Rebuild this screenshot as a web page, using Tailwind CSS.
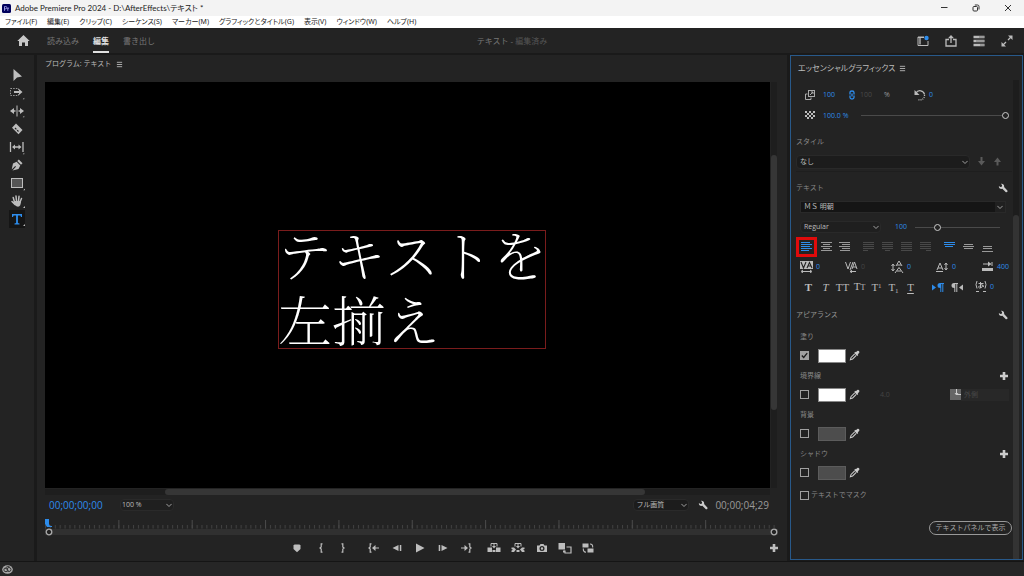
<!DOCTYPE html>
<html lang="ja">
<head>
<meta charset="utf-8">
<meta name="viewport" content="width=device-width, initial-scale=1">
<title>Adobe Premiere Pro 2024</title>
<script src="https://cdn.jsdelivr.net/npm/@tailwindcss/browser@4"></script>
</head>
<body class="bg-[#232323] font-['Open_Sans','Noto_Sans_CJK_JP',sans-serif] text-[8px] leading-[12px] text-[#9a9a9a]">
<svg class="hidden" aria-hidden="true">
  <defs>
    <symbol id="wrench" viewBox="0 0 16 16"><path fill="currentColor" d="M1.4 4.6 3.8 6.400 6 5.800 6.600 3.600 4.700 1.200C7.200.5 10 2.200 9.900 5.300L9.700 6.400 15 12.100C16 13.800 14.300 15.600 12.600 14.700L7 9.300C4.200 10.200.8 8.200 1.400 4.600Z"/></symbol>
    <symbol id="dropper" viewBox="0 0 16 16"><path fill="currentColor" d="M10 3.400 12 1.400C14 .2 16 2.300 14.800 4.200L12.700 6.200 13.500 7.100 12 8.600 7.600 4.200 9.100 2.700Z"/><path fill="none" stroke="currentColor" stroke-width="1.500" d="M8.300 5.500 3 10.800 2 14 5.300 13 10.600 7.700"/></symbol>
    <symbol id="plus" viewBox="0 0 10 10"><path fill="currentColor" d="M3.700 1H6.300V3.700H9V6.300H6.300V9H3.700V6.300H1V3.700H3.700Z"/></symbol>
    <symbol id="chev" viewBox="0 0 8 8"><path fill="none" stroke="currentColor" stroke-width="1.100" d="M.5 2.500 4 6 7.500 2.500"/></symbol>
    <symbol id="menu" viewBox="0 0 8 8"><path stroke="currentColor" d="M1 1.500H7M1 4H7M1 6.500H7"/></symbol>
    <symbol id="corner" viewBox="0 0 4 4"><path fill="currentColor" d="M4 0V4H0Z"/></symbol>
  </defs>
</svg>
<div class="flex min-h-screen flex-col">

  <!-- Window title -->
  <div class="flex h-4 items-center bg-[#f3f3f3] pl-[2px] text-[#222]">
    <svg class="h-[9px] w-[9px]" viewBox="0 0 9 9"><rect width="9" height="9" rx="1.500" fill="#00005b"/><path fill="none" stroke="#b9b9ff" stroke-width=".8" d="M2.500 6.800V2.500H3.600Q4.900 2.500 4.900 3.600T3.600 4.800H2.500M5.800 6.800V3.800M5.800 4.900Q6 3.900 7.100 3.900"/></svg>
    <h1 class="ml-1 flex-1 whitespace-nowrap font-['Lato','Noto_Sans_CJK_JP',sans-serif] text-[8px] [font-feature-settings:'palt']">Adobe Premiere Pro 2024 - D:\AfterEffects\テキスト *</h1>
    <button class="flex w-8 justify-center" aria-label="最小化"><svg class="h-2 w-2" viewBox="0 0 8 8"><path stroke="#333" d="M1 3.500H7.500"/></svg></button>
    <button class="flex w-8 justify-center" aria-label="元に戻す"><svg class="h-2 w-2" viewBox="0 0 8 8"><g fill="none" stroke="#333"><rect x="1" y="2.500" width="4.500" height="4.500" rx="1"/><path d="M2.800 1H5.500Q7 1 7 2.500V5.500"/></g></svg></button>
    <button class="flex w-8 justify-center" aria-label="閉じる"><svg class="h-2 w-2" viewBox="0 0 8 8"><path stroke="#333" d="M1 1 7 7M7 1 1 7"/></svg></button>
  </div>

  <!-- Application menu -->
  <nav class="flex h-3 items-center gap-[10px] bg-white pl-[5px] whitespace-nowrap font-['Noto_Sans','Noto_Sans_CJK_JP',sans-serif] text-[7px] text-[#222] [font-feature-settings:'palt']">
    <button>ファイル(F)</button><button>編集(E)</button><button>クリップ(C)</button><button>シーケンス(S)</button><button>マーカー(M)</button><button>グラフィックとタイトル(G)</button><button>表示(V)</button><button>ウィンドウ(W)</button><button>ヘルプ(H)</button>
  </nav>

  <!-- Workspace header -->
  <header class="grid h-[27px] grid-cols-[1fr_auto_1fr] border-b-2 border-[#1a1a1a] whitespace-nowrap text-[#777]">
    <div class="flex items-center gap-[14px] pl-[17px]">
      <button class="text-[#c8c8c8]" aria-label="ホーム"><svg class="h-[13px] w-[13px]" viewBox="0 0 13 13"><path fill="currentColor" d="M6.500 1 12.700 7H11V12H8V8.500H5V12H2V7H.3Z"/></svg></button>
      <button class="ml-[3px]">読み込み</button>
      <button class="h-full border-b-2 border-[#e0e0e0] pt-[2px] font-bold text-[#e0e0e0]">編集</button>
      <button>書き出し</button>
    </div>
    <div class="flex items-center">テキスト -&nbsp;<span class="text-[#555]">編集済み</span></div>
    <div class="flex items-center justify-end gap-4 pr-[11px] text-[#bbb]">
      <button aria-label="ワークスペース"><svg class="h-3 w-3" viewBox="0 0 12 12"><path fill="none" stroke="currentColor" d="M7 2H1V10.500H11V6"/><path fill="#888" d="M2 3H4V9.500H2Z"/><path stroke="currentColor" d="M1 2.500H7"/><circle cx="9.500" cy="3" r="2.200" fill="#2d8ceb"/></svg></button>
      <button aria-label="クイック書き出し"><svg class="h-3 w-3" viewBox="0 0 12 12"><path fill="none" stroke="currentColor" stroke-width="1.300" d="M4 4.500H1V11H11V4.500H8M6 8V2"/><path fill="currentColor" d="M6 0 9 3.200H3Z"/></svg></button>
      <button aria-label="進行状況"><svg class="h-3 w-3" viewBox="0 0 12 12"><path stroke="currentColor" stroke-width="2.400" d="M.5 2H11.500M.5 6H11.500M.5 10H11.500"/><path stroke="#666" stroke-width=".8" d="M6 2H11M3 6H11M7 10H11"/></svg></button>
      <button aria-label="全画面"><svg class="h-3 w-3" viewBox="0 0 12 12"><path fill="currentColor" d="M7 .5H11.500V5ZM.5 7 5 11.500H.5Z"/><path stroke="currentColor" stroke-width="1.300" d="M10.500 1.500 7 5M5 7 1.500 10.500"/></svg></button>
    </div>
  </header>

  <main class="flex flex-1 gap-[3px] bg-[#1a1a1a]">
    <!-- Tools -->
    <aside class="flex w-[34px] flex-col items-center bg-[#232323] pt-[11px] text-[#bdbdbd]">
      <button class="h-[18px]" aria-label="選択"><svg class="h-4 w-4" viewBox="0 0 16 16"><path fill="currentColor" d="M4.500 2V14L8 10.500 13 9.500Z"/></svg></button>
      <button class="h-[18px]" aria-label="トラックの前方選択"><svg class="h-4 w-4" viewBox="0 0 16 16"><rect x="1.500" y="3.500" width="8" height="7" fill="none" stroke="#999" stroke-dasharray="1.500 1.200"/><path fill="currentColor" d="M5 6H10V4L13.500 7 10 10V8H5Z"/><use href="#corner" x="13.500" y="12.500" width="2" height="2"/></svg></button>
      <button class="h-[18px]" aria-label="リップル"><svg class="h-4 w-4" viewBox="0 0 16 16"><path fill="currentColor" d="M7.500 2.500H8.500V13.500H7.500ZM6.500 7.200V8.800H5V11L1 8 5 5V7.200ZM9.500 7.200V8.800H11V11L15 8 11 5V7.200Z"/><use href="#corner" x="13.500" y="12.500" width="2" height="2"/></svg></button>
      <button class="h-[18px]" aria-label="レーザー"><svg class="h-4 w-4" viewBox="0 0 16 16"><path fill="currentColor" d="M7 2.500 13.500 9 9.500 13.200 3 6.700Z"/><path stroke="#232323" stroke-width="1.200" d="M6 7 9.500 10.500" stroke-dasharray="2 1"/></svg></button>
      <button class="h-[18px]" aria-label="スリップ"><svg class="h-4 w-4" viewBox="0 0 16 16"><path stroke="currentColor" stroke-width="1.300" d="M1.500 3V13M14 3V13M5 8H11"/><path fill="currentColor" d="M6 5.500V10.500L3 8ZM9.500 5.500V10.500L12.500 8Z"/><use href="#corner" x="13.500" y="13.500" width="2" height="2"/></svg></button>
      <button class="h-[18px]" aria-label="ペン"><svg class="h-4 w-4" viewBox="0 0 16 16"><path fill="currentColor" d="M9.800 2.500 13.500 6.200 12 7.700 8.300 4ZM7.600 4.700 11.300 8.400 9.500 12 3.500 13.500 7 9.800 6.200 9 2.700 12.600 4 6.500Z"/></svg></button>
      <button class="h-[18px]" aria-label="長方形"><svg class="h-4 w-4" viewBox="0 0 16 16"><rect x="2.500" y="3.500" width="11" height="9" fill="#555" stroke="currentColor"/><use href="#corner" x="14" y="13.500" width="2" height="2"/></svg></button>
      <button class="h-[18px]" aria-label="手のひら"><svg class="h-4 w-4" viewBox="0 0 16 16"><g fill="none" stroke="currentColor" stroke-width="1.500" stroke-linecap="round"><path d="M5.500 9 4.200 4.500M7.500 8 7 3M9.500 8 10 3.300M11 9 12.500 5.500M6 11.500 3 8.500"/></g><path fill="currentColor" d="M5 8H12Q12 13.500 9 13.800 6.500 13.500 4.500 10Z"/><use href="#corner" x="14" y="13" width="2" height="2"/></svg></button>
      <button class="h-[18px] bg-[#151515] text-[#2d8ceb]" aria-label="横書き文字"><svg class="h-4 w-4" viewBox="0 0 16 16"><path fill="currentColor" d="M3 3H13V6H12L11.300 4.500H8.900V12L10.500 12.500V13.500H5.500V12.500L7.100 12V4.500H4.700L4 6H3Z"/><use href="#corner" x="14" y="13" width="2" height="2" color="#bbb"/></svg></button>
    </aside>

    <!-- Program monitor -->
    <section class="flex min-w-0 flex-1 flex-col bg-[#232323] pl-2">
      <div class="flex h-[18px] items-center gap-[5px] text-[7px] whitespace-nowrap text-[#bbb]"><h2>プログラム: テキスト</h2><button aria-label="パネルメニュー"><svg class="h-[7px] w-[7px]"><use href="#menu"/></svg></button></div>
      <div class="mt-[9px] flex flex-1 pr-[10px]">
        <div class="relative flex-1 bg-black">
          <div class="absolute top-[36.500%] left-[32.200%] flex h-[119px] w-[268px] items-center justify-center border border-[#7a1c1c] pb-2 text-white">
            <p class="font-['MS_Mincho','Noto_Serif_CJK_JP','Noto_Sans_CJK_JP',serif] text-[54px] leading-[65px] font-thin whitespace-nowrap">テキストを<br>左揃え</p>
          </div>
        </div>
        <div class="ml-px flex w-[6px] flex-col bg-[#1e1e1e] pt-[73px] pb-[78px]"><div class="flex-1 rounded-sm bg-[#363636]"></div></div>
      </div>
      <div class="mt-px mr-[17px] flex h-[6px] bg-[#1e1e1e] pr-[125px] pl-[120px]"><div class="flex-1 rounded-sm bg-[#363636]"></div></div>
      <div class="mr-[18px] flex h-5 items-center whitespace-nowrap">
        <span class="w-[75px] pl-1 text-[10px] text-[#2d8ceb]">00;00;00;00</span>
        <div class="relative w-[54px] text-[#bbb]">
          <select class="block h-3 w-full appearance-none rounded-sm border border-[#2a2a2a] bg-[#1f1f1f] pl-px text-[7px] leading-[10px]" aria-label="ズームレベル"><option>100 %</option></select>
          <svg class="pointer-events-none absolute top-[3px] right-[2px] h-[6px] w-[6px]"><use href="#chev"/></svg>
        </div>
        <div class="flex-1"></div>
        <div class="relative w-[56px] text-[#bbb]">
          <select class="block h-3 w-full appearance-none rounded-sm border border-[#2a2a2a] bg-[#1c1c1c] pl-[2px] text-[7px] leading-[10px]" aria-label="再生時の解像度"><option>フル画質</option></select>
          <svg class="pointer-events-none absolute top-[3px] right-[2px] h-[6px] w-[6px]"><use href="#chev"/></svg>
        </div>
        <button class="ml-[9px] text-[#ccc]" aria-label="設定"><svg class="h-[10px] w-[10px]"><use href="#wrench"/></svg></button>
        <span class="ml-[7px] text-[10px]">00;00;04;29</span>
      </div>
      <div class="relative mt-1 mr-[9px] h-[10px]">
        <svg class="block h-full w-full" aria-hidden="true">
          <defs>
            <pattern id="minor" width="4.890" height="10" patternUnits="userSpaceOnUse"><path stroke="#414141" stroke-width="1" d="M.5 6V9.500"/></pattern>
            <pattern id="major" width="73.350" height="10" patternUnits="userSpaceOnUse"><path stroke="#4a4a4a" stroke-width="1" d="M.5 1V9.500"/></pattern>
          </defs>
          <rect width="100%" height="10" fill="url(#minor)"/><rect x="10" width="100%" height="10" fill="url(#major)"/>
        </svg>
        <svg class="absolute top-0 left-0 h-2 w-[7px]" viewBox="0 0 7 8"><path fill="#2d8ceb" d="M0 0H4V5L5 7H7V8H2L0 5Z"/></svg>
      </div>
      <div class="mr-[9px] flex h-[6px] items-center justify-between bg-[#303030] text-[#aaa]">
        <svg class="h-2 w-2 shrink-0" viewBox="0 0 8 8"><circle cx="4" cy="4" r="2.800" fill="#232323" stroke="currentColor" stroke-width="1.300"/></svg>
        <svg class="h-2 w-2 shrink-0" viewBox="0 0 8 8"><circle cx="4" cy="4" r="2.800" fill="#232323" stroke="currentColor" stroke-width="1.300"/></svg>
      </div>
      <div class="flex h-[26px] items-center pl-[240px] text-[#bdbdbd]">
        <button class="flex w-6 justify-center" aria-label="マーカーを追加"><svg class="h-3 w-3" viewBox="0 0 12 12"><path fill="currentColor" d="M3.500 2.500H8.500L9.500 3.500V7L6 10.300 2.500 7V3.500Z"/></svg></button>
        <button class="flex w-6 justify-center" aria-label="インをマーク"><svg class="h-3 w-3" viewBox="0 0 12 12"><path fill="none" stroke="currentColor" stroke-width="1.200" d="M7.500 1.800H6.200V5L5 6 6.200 7V10.200H7.500"/></svg></button>
        <button class="flex w-5 justify-center" aria-label="アウトをマーク"><svg class="h-3 w-3" viewBox="0 0 12 12"><path fill="none" stroke="currentColor" stroke-width="1.200" d="M4.500 1.800H5.800V5L7 6 5.800 7V10.200H4.500"/></svg></button>
        <button class="ml-[9px] flex w-[23px] justify-center" aria-label="インへ移動"><svg class="h-3 w-3" viewBox="0 0 12 12"><path fill="none" stroke="currentColor" stroke-width="1.200" d="M3.500 1.800H2.200V5L1 6 2.200 7V10.200H3.500M6 6H11"/><path fill="currentColor" d="M7.500 3V9L4 6Z"/></svg></button>
        <button class="flex w-[23px] justify-center" aria-label="1 フレーム前へ"><svg class="h-3 w-3" viewBox="0 0 12 12"><path fill="currentColor" d="M7.500 3V9L1.500 6ZM8.800 3H10.300V9H8.800Z"/></svg></button>
        <button class="flex w-[23px] justify-center" aria-label="再生"><svg class="h-3 w-3" viewBox="0 0 12 12"><path fill="currentColor" d="M2 1.500 10.500 6 2 10.500Z"/></svg></button>
        <button class="flex w-[23px] justify-center" aria-label="1 フレーム先へ"><svg class="h-3 w-3" viewBox="0 0 12 12"><path fill="currentColor" d="M4.500 3V9L10.500 6ZM1.700 3H3.200V9H1.700Z"/></svg></button>
        <button class="flex w-[23px] justify-center" aria-label="アウトへ移動"><svg class="h-3 w-3" viewBox="0 0 12 12"><path fill="none" stroke="currentColor" stroke-width="1.200" d="M8.500 1.800H9.800V5L11 6 9.800 7V10.200H8.500M1 6H6"/><path fill="currentColor" d="M4.500 3V9L8 6Z"/></svg></button>
        <button class="ml-[5px] flex w-6 justify-center" aria-label="リフト"><svg class="h-3 w-[14px]" viewBox="0 0 14 12"><path fill="currentColor" d="M.5 5.500H5V10H.5ZM9 5.500H13.500V10H9ZM5.500 8H8.500V10H5.500Z"/><path fill="none" stroke="currentColor" d="M4 4.500V1.500H10V4.500M7 2V5"/><path fill="currentColor" d="M5 4H9L7 6.500Z"/></svg></button>
        <button class="flex w-6 justify-center" aria-label="抽出"><svg class="h-3 w-[14px]" viewBox="0 0 14 12"><path fill="currentColor" d="M.5 5.500H3L5 7.500 3 10H.5V8.500L2 7.700.5 7ZM13.500 5.500H11L9 7.500 11 10H13.500V8.500L12 7.700 13.500 7ZM5.500 8H8.500V10H5.500Z"/><path fill="none" stroke="currentColor" d="M4 4.500V1.500H10V4.500M7 2V5"/><path fill="currentColor" d="M5 4H9L7 6.500Z"/></svg></button>
        <button class="flex w-[23px] justify-center" aria-label="フレームを書き出し"><svg class="h-3 w-3" viewBox="0 0 12 12"><path fill="currentColor" fill-rule="evenodd" d="M1 3.500H3.500L4.500 2H7.500L8.500 3.500H11V10H1ZM6 4A2.500 2.500 0 1 0 6 9 2.500 2.500 0 1 0 6 4M6 5.300A1.200 1.200 0 1 1 6 7.700 1.200 1.200 0 1 1 6 5.300"/></svg></button>
        <button class="flex w-[23px] justify-center" aria-label="比較表示"><svg class="h-3 w-[14px]" viewBox="0 0 14 12"><path fill="currentColor" d="M.5 1H7V7.500H.5Z"/><path fill="none" stroke="currentColor" stroke-width="1.200" d="M8.500 5H13V11H7V8.500"/><path fill="currentColor" d="M5 8.500H7V10.500H5Z"/></svg></button>
        <button class="flex w-[23px] justify-center" aria-label="プロキシの切り替え"><svg class="h-3 w-3" viewBox="0 0 12 12"><path fill="currentColor" d="M.5 1.500H6.500V5.500H.5ZM5.500 6.500H11.500V10.500H5.500Z"/><path fill="none" stroke="currentColor" stroke-width="1.100" d="M8 2Q11 2 10.700 5.500M4 10.200Q1 10 1.300 6.500"/></svg></button>
        <div class="flex-1"></div>
        <button class="mr-[8px]" aria-label="ボタンエディター"><svg class="h-[10px] w-[10px]"><use href="#plus"/></svg></button>
      </div>
    </section>

    <!-- Essential Graphics -->
    <section class="mr-px mb-px flex w-[233px] shrink-0 flex-col border border-[#28598a] bg-[#232323]">
      <div class="flex h-6 items-center gap-[4px] pl-[7px] whitespace-nowrap text-[#bbb]"><h2 class="[font-feature-settings:'palt']">エッセンシャルグラフィックス</h2><button aria-label="パネルメニュー"><svg class="h-[7px] w-[7px]"><use href="#menu"/></svg></button></div>
      <div class="flex flex-1">
        <div class="min-w-0 flex-1 pt-1 pl-[5px] whitespace-nowrap">
          <div class="flex h-[21px] items-center pl-[9px] text-[7px] text-[#2d8ceb]">
            <svg class="h-[10px] w-[10px] text-[#aaa]" viewBox="0 0 10 10"><g fill="none" stroke="currentColor"><rect x="3.500" y=".5" width="6" height="6"/><path d="M2.500 4H.5V9.500H6V7.500M5 5 8 2M6 2H8V4"/></g></svg>
            <span class="ml-2 w-[25px]">100</span>
            <svg class="h-[10px] w-[8px]" viewBox="0 0 8 10"><g fill="none" stroke="currentColor" stroke-width="1.300"><path d="M2 4.500V2.500Q2 1 4 1T6 2.500V4.500M2 5.500V7.500Q2 9 4 9T6 7.500V5.500M4 3.500V6.500"/></g></svg>
            <span class="ml-[4px] w-6 text-[#4a4a4a]">100</span>
            <span class="w-[30px] text-[#999]">%</span>
            <svg class="h-3 w-3 text-[#bbb]" viewBox="0 0 12 12"><path fill="none" stroke="currentColor" stroke-width="1.300" d="M2 4A4.600 4.600 0 0 1 10.500 5.500"/><path fill="none" stroke="currentColor" stroke-width="1.300" stroke-dasharray="1 1" d="M10.500 6A4.500 4.500 0 0 1 4 10.500"/><path fill="currentColor" d="M.5 1V6H5.500Z"/></svg>
            <span class="ml-[3px]">0</span>
          </div>
          <div class="flex h-[21px] items-center pr-[3px] pl-[9px] text-[7px] text-[#2d8ceb]">
            <svg class="h-[9px] w-[10px]" viewBox="0 0 10 9" shape-rendering="crispEdges"><path fill="none" stroke="#bbb" stroke-width="2" stroke-dasharray="2 2" d="M0 1H10M0 5H10M2 3H10M2 7H10"/></svg>
            <span class="ml-2 w-[38px]">100.0 %</span>
            <input type="range" value="100" aria-label="不透明度" class="h-2 min-w-0 flex-1 appearance-none bg-[linear-gradient(#4a4a4a,#4a4a4a)] bg-[length:100%_1px] bg-center bg-no-repeat [&::-webkit-slider-thumb]:h-[7px] [&::-webkit-slider-thumb]:w-[7px] [&::-webkit-slider-thumb]:appearance-none [&::-webkit-slider-thumb]:rounded-full [&::-webkit-slider-thumb]:border [&::-webkit-slider-thumb]:border-[#ccc] [&::-webkit-slider-thumb]:bg-[#232323]">
          </div>
          <label for="style" class="mt-[6px] flex h-5 items-center text-[7px] text-[#888]">スタイル</label>
          <div class="flex h-[20px] items-center border-b border-[#1e1e1e] pr-[10px] text-[#bbb]">
            <div class="relative flex-1"><select id="style" class="block h-[14px] w-full appearance-none rounded-sm border border-[#292929] bg-[#1c1c1c] pl-[3px] text-[7px]"><option>なし</option></select><svg class="pointer-events-none absolute top-1 right-[2px] h-[6px] w-[6px]"><use href="#chev"/></svg></div>
            <button class="ml-[7px] text-[#5a5a5a]" aria-label="スタイルを取り込む"><svg class="h-[9px] w-[9px]" viewBox="0 0 9 9"><path fill="currentColor" d="M3.500 0H5.500V4H8L4.500 8.500 1 4H3.500Z"/></svg></button>
            <button class="ml-[7px] text-[#5a5a5a]" aria-label="スタイルを押し出す"><svg class="h-[9px] w-[9px]" viewBox="0 0 9 9"><path fill="currentColor" d="M3.500 8.500H5.500V5H8L4.500.5 1 5H3.500Z"/></svg></button>
          </div>
          <div class="mt-[7px] flex h-[18px] items-center justify-between pr-1 text-[7px] text-[#888]"><h3>テキスト</h3><button class="text-[#ccc]" aria-label="テキスト設定"><svg class="h-[10px] w-[10px]"><use href="#wrench"/></svg></button></div>
          <div class="flex h-5 items-center pr-[6px] pl-1">
            <div class="relative flex-1 text-[#bbb]"><select class="block h-3 w-full appearance-none border border-[#292929] bg-[#151515] pl-[3px] text-[7px] leading-[10px]" aria-label="フォント"><option>ＭＳ 明朝</option></select><span class="pointer-events-none absolute top-px right-px flex h-[10px] w-[10px] items-center justify-center bg-[#202020]"><svg class="h-[6px] w-[6px]"><use href="#chev"/></svg></span></div>
          </div>
          <div class="flex h-5 items-center pr-[12px] pl-1 text-[7px]">
            <div class="relative w-[81px] text-[#bbb]"><select class="block h-3 w-full appearance-none rounded-sm border border-[#292929] bg-[#1f1f1f] pl-[3px] text-[7px] leading-[10px]" aria-label="フォントスタイル"><option>Regular</option></select><svg class="pointer-events-none absolute top-[3px] right-[2px] h-[6px] w-[6px]"><use href="#chev"/></svg></div>
            <span class="ml-[14px] w-5 text-[#2d8ceb]">100</span>
            <input type="range" value="24" aria-label="フォントサイズ" class="h-2 min-w-0 flex-1 appearance-none bg-[linear-gradient(#4a4a4a,#4a4a4a)] bg-[length:100%_1px] bg-center bg-no-repeat [&::-webkit-slider-thumb]:h-[7px] [&::-webkit-slider-thumb]:w-[7px] [&::-webkit-slider-thumb]:appearance-none [&::-webkit-slider-thumb]:rounded-full [&::-webkit-slider-thumb]:border [&::-webkit-slider-thumb]:border-[#ccc] [&::-webkit-slider-thumb]:bg-[#232323]">
          </div>
          <div class="flex h-5 items-center text-[#999]">
            <button class="flex h-5 w-[21px] shrink-0 items-center justify-center border-3 border-[#e00b0b] text-[#2d8ceb]" aria-label="左揃え"><svg class="h-3 w-[11px]" viewBox="0 0 11 12"><path stroke="currentColor" d="M0 1.500H9M0 3.500H11M0 5.500H9M0 7.500H11M0 9.500H8"/></svg></button>
            <button class="flex w-[18px] justify-center" aria-label="中央揃え"><svg class="h-3 w-[11px]" viewBox="0 0 11 12"><path stroke="currentColor" d="M0 1.500H11M2 3.500H9M0 5.500H11M2 7.500H9M0 9.500H11"/></svg></button>
            <button class="flex w-[19px] justify-center" aria-label="右揃え"><svg class="h-3 w-[11px]" viewBox="0 0 11 12"><path stroke="currentColor" d="M0 1.500H11M3 3.500H11M0 5.500H11M3 7.500H11M1 9.500H11"/></svg></button>
            <button class="ml-[5px] flex w-[19px] justify-center text-[#484848]" aria-label="両端揃え 左"><svg class="h-3 w-[11px]" viewBox="0 0 11 12"><path stroke="currentColor" d="M0 1.500H11M0 3.500H11M0 5.500H11M0 7.500H11M0 9.500H5"/></svg></button>
            <button class="flex w-[19px] justify-center text-[#484848]" aria-label="両端揃え 中央"><svg class="h-3 w-[11px]" viewBox="0 0 11 12"><path stroke="currentColor" d="M0 1.500H11M0 3.500H11M0 5.500H11M0 7.500H11M3 9.500H8"/></svg></button>
            <button class="flex w-[19px] justify-center text-[#484848]" aria-label="両端揃え"><svg class="h-3 w-[11px]" viewBox="0 0 11 12"><path stroke="currentColor" d="M0 1.500H11M0 3.500H11M0 5.500H11M0 7.500H11M0 9.500H11"/></svg></button>
            <button class="flex w-[19px] justify-center text-[#484848]" aria-label="両端揃え 右"><svg class="h-3 w-[11px]" viewBox="0 0 11 12"><path stroke="currentColor" d="M0 1.500H11M0 3.500H11M0 5.500H11M0 7.500H11M6 9.500H11"/></svg></button>
            <button class="ml-[5px] flex w-[19px] justify-center text-[#2d8ceb]" aria-label="上揃え"><svg class="h-3 w-[11px]" viewBox="0 0 11 12"><path stroke="currentColor" d="M0 1.500H11M0 3.500H11M1 5.500H9"/></svg></button>
            <button class="flex w-[19px] justify-center" aria-label="上下中央揃え"><svg class="h-3 w-[11px]" viewBox="0 0 11 12"><path stroke="currentColor" d="M1 3.500H10M0 5.500H11M1 7.500H10"/></svg></button>
            <button class="flex w-[19px] justify-center" aria-label="下揃え"><svg class="h-3 w-[11px]" viewBox="0 0 11 12"><path stroke="currentColor" d="M1 5.500H10M1 7.500H10M0 10.500H11"/></svg></button>
          </div>
          <div class="flex h-5 items-center pl-1 text-[7px] text-[#2d8ceb] [&>span]:ml-[3px]">
            <svg class="h-3 w-[13px] text-[#bbb]" viewBox="0 0 13 12"><rect width="13" height="8" fill="currentColor"/><path fill="none" stroke="#232323" stroke-width="1.100" d="M1 1 3.500 7 6 1M7 7 9.500 1.500 12 7M8 5H11"/><path stroke="currentColor" d="M2 10.500H11M3 9 1 10.500 3 12M10 9 12 10.500 10 12"/></svg><span class="w-[29px]">0</span>
            <svg class="h-3 w-[13px] text-[#bbb]" viewBox="0 0 13 12"><path fill="none" stroke="currentColor" d="M.5 1 3 8 5.500 1M5 9 8 1M7 8 9.500 1 12 8M8 6H11M5 10.500H11M7 9 5 10.500 7 12"/></svg><span class="w-[30px] text-[#444]">0</span>
            <svg class="h-3 w-[13px] text-[#bbb]" viewBox="0 0 13 12"><path fill="none" stroke="currentColor" d="M5 5 8 0 11 5M6 4H10M4 12 8 6.500 12 12M6 10H10M2 4V9M.5 5 2 3 3.500 5M.5 8 2 10 3.500 8"/></svg><span class="w-[29px]">0</span>
            <svg class="h-3 w-[13px] text-[#bbb]" viewBox="0 0 13 12"><path fill="none" stroke="currentColor" d="M1 9 4 2 7 9M2 7H6M0 10.500H7M10 2V9M8.500 4 10 2 11.500 4M8.500 7 10 9 11.500 7"/></svg><span class="w-[29px]">0</span>
            <svg class="h-3 w-[13px] text-[#bbb]" viewBox="0 0 13 12"><path stroke="currentColor" d="M2 3H9M11 1V5"/><path fill="currentColor" d="M7 .5 10.500 3 7 5.500ZM1 7H12V10H1Z"/></svg><span>400</span>
          </div>
          <div class="flex h-5 items-center pl-1 font-['Liberation_Serif',serif] text-[11px] text-[#bbb] [&>button]:w-[17px] [&>button]:text-center">
            <button class="font-bold" aria-label="太字">T</button><button class="italic" aria-label="斜体">T</button><button aria-label="オールキャップス">TT</button><button aria-label="スモールキャップス">T<span class="text-[8px]">T</span></button><button aria-label="上付き文字">T<sup class="text-[7px]">1</sup></button><button aria-label="下付き文字">T<sub class="text-[7px]">1</sub></button><button class="underline underline-offset-2" aria-label="下線">T</button>
            <button class="ml-[10px] flex justify-center text-[#2d8ceb]" aria-label="左から右"><svg class="h-[9px] w-3" viewBox="0 0 12 9"><path fill="currentColor" d="M0 1.500 4 4.500 0 7.500ZM8 0H12V1H11.300V9H10.300V1H9.300V9H8.300V5Q5.500 5 5.500 2.500T8 0Z"/></svg></button>
            <button class="ml-[2px] flex justify-center" aria-label="右から左"><svg class="h-[9px] w-3" viewBox="0 0 12 9"><path fill="currentColor" d="M12 1.500 8 4.500 12 7.500ZM3 0H7V1H6.300V9H5.300V1H4.300V9H3.300V5Q.5 5 .5 2.500T3 0Z"/></svg></button>
            <svg class="ml-[10px] h-3 w-3" viewBox="0 0 12 12"><path fill="none" stroke="currentColor" d="M2 0Q0 3.500 2 7.500M10 0Q12 3.500 10 7.500M3.500 2.500H8.500M5.500 1V7M8 4Q7 7.500 4.500 7T5 4.500 8.500 6M1 10.500H4M8 10.500H11"/></svg><span class="ml-[3px] font-['Open_Sans',sans-serif] text-[7px] text-[#2d8ceb]">0</span>
          </div>
          <div class="mt-[9px] flex h-[18px] items-center justify-between pr-1 text-[7px] text-[#999]"><h3>アピアランス</h3><button class="text-[#ccc]" aria-label="アピアランス設定"><svg class="h-[10px] w-[10px]"><use href="#wrench"/></svg></button></div>

          <div class="mt-1 pr-[3px] pl-1 text-[7px] text-[#888]">
            <label for="fill" class="flex h-[18px] items-center">塗り</label>
            <div class="flex h-[19px] items-center">
              <span class="relative h-[9px] w-[9px]"><input id="fill" type="checkbox" checked class="block h-[9px] w-[9px] appearance-none bg-[#a0a0a0]"><svg class="pointer-events-none absolute top-0 left-0 h-[9px] w-[9px]" viewBox="0 0 9 9"><path fill="none" stroke="#1b1b1b" stroke-width="1.300" d="M1.800 4.500 3.700 6.500 7.200 2.200"/></svg></span>
              <button class="ml-[9px] h-[14px] w-[28px] border border-[#888] bg-white" aria-label="塗りの色"></button>
              <button class="ml-[3px] text-[#ccc]" aria-label="塗りの色を選択"><svg class="h-[11px] w-[11px]"><use href="#dropper"/></svg></button>
            </div>
          </div>
          <div class="mt-[2px] pr-[3px] pl-1 text-[7px] text-[#888]">
            <div class="flex h-[18px] items-center justify-between"><label for="stroke">境界線</label><button class="text-[#ccc]" aria-label="境界線を追加"><svg class="h-[10px] w-[10px]"><use href="#plus"/></svg></button></div>
            <div class="flex h-[19px] items-center">
              <input id="stroke" type="checkbox" class="h-[9px] w-[9px] appearance-none border border-[#a0a0a0]">
              <button class="ml-[9px] h-[14px] w-[28px] border border-[#888] bg-white" aria-label="境界線の色"></button>
              <button class="ml-[3px] text-[#ccc]" aria-label="境界線の色を選択"><svg class="h-[11px] w-[11px]"><use href="#dropper"/></svg></button>
              <span class="ml-5 flex-1 text-[#444]">4.0</span>
              <svg class="h-[11px] w-[11px]" viewBox="0 0 11 11"><path fill="#666" d="M0 0H11V11H0Z"/><path fill="none" stroke="#ccc" d="M6.500 0V5.500H11M5 4 6.500 6 8 4"/></svg>
              <div class="w-[48px]"><select class="block h-3 w-full appearance-none bg-[#282828] pl-[3px] text-[7px] leading-[10px] text-[#484848]" aria-label="境界線の位置" disabled><option>外側</option></select></div>
            </div>
          </div>
          <div class="mt-[2px] pr-[3px] pl-1 text-[7px] text-[#888]">
            <label for="bg" class="flex h-[18px] items-center">背景</label>
            <div class="flex h-[19px] items-center">
              <input id="bg" type="checkbox" class="h-[9px] w-[9px] appearance-none border border-[#a0a0a0]">
              <button class="ml-[9px] h-[14px] w-[28px] border border-[#5c5c5c] bg-[#4d4d4d]" aria-label="背景の色"></button>
              <button class="ml-[3px] text-[#ccc]" aria-label="背景の色を選択"><svg class="h-[11px] w-[11px]"><use href="#dropper"/></svg></button>
            </div>
          </div>
          <div class="mt-[2px] pr-[3px] pl-1 text-[7px] text-[#888]">
            <div class="flex h-[18px] items-center justify-between"><label for="shadow">シャドウ</label><button class="text-[#ccc]" aria-label="シャドウを追加"><svg class="h-[10px] w-[10px]"><use href="#plus"/></svg></button></div>
            <div class="flex h-[19px] items-center">
              <input id="shadow" type="checkbox" class="h-[9px] w-[9px] appearance-none border border-[#a0a0a0]">
              <button class="ml-[9px] h-[14px] w-[28px] border border-[#5c5c5c] bg-[#4d4d4d]" aria-label="シャドウの色"></button>
              <button class="ml-[3px] text-[#ccc]" aria-label="シャドウの色を選択"><svg class="h-[11px] w-[11px]"><use href="#dropper"/></svg></button>
            </div>
          </div>
          <label class="mt-[3px] flex h-5 items-center gap-[2px] pl-1 text-[7px] text-[#888]"><input type="checkbox" class="h-[9px] w-[9px] appearance-none border border-[#a0a0a0]">テキストでマスク</label>
          <div class="mt-4 flex justify-end"><button class="h-[14px] w-[83px] rounded-full border border-[#999] text-[7px] leading-[10px] text-[#aaa]">テキストパネルで表示</button></div>
        </div>
        <div class="mr-[3px] ml-px flex w-[6px] flex-col bg-[#1d1d1d] pt-[135px]"><div class="flex-1 rounded-t-sm bg-[#333]"></div></div>
      </div>
    </section>
  </main>

  <!-- Status bar -->
  <footer class="flex h-[15px] items-center border-t border-[#151515] bg-[#262626] pl-[2px]">
    <button aria-label="Creative Cloud"><svg class="h-[9px] w-[11px]" viewBox="0 0 11 9"><ellipse cx="5.500" cy="4.500" rx="5.300" ry="4.300" fill="#aaa"/><g fill="none" stroke="#262626" stroke-width=".9"><circle cx="7" cy="4.500" r="2"/><path d="M5.500 6.500Q2 7.500 1.800 5T4.500 3.300L6.500 5.500M3.500 2.800Q5 1 7.500 1.700"/></g></svg></button>
  </footer>
</div>
</body>
</html>
